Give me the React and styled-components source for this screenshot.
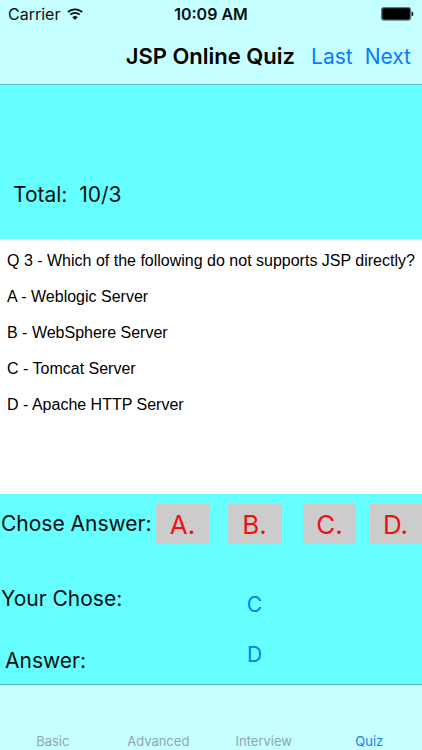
import React, { useState } from "react";
import styled, { createGlobalStyle } from "styled-components";

const options = [
  { id: "A", text: "Weblogic Server" },
  { id: "B", text: "WebSphere Server" },
  { id: "C", text: "Tomcat Server" },
  { id: "D", text: "Apache HTTP Server" },
];

const tabs = ["Basic", "Advanced", "Interview", "Quiz"];

const WifiIcon = () => (
  <svg width="16" height="12" viewBox="0 0 16 12" fill="none" aria-hidden="true">
    <path d="M0.9 4.2 A10.2 10.2 0 0 1 15.1 4.2" stroke="#0a1414" strokeWidth="1.8" />
    <path d="M3.3 6.7 A6.8 6.8 0 0 1 12.7 6.7" stroke="#0a1414" strokeWidth="1.8" />
    <path d="M8 12 L5.3 9.2 A3.9 3.9 0 0 1 10.7 9.2 Z" fill="#0a1414" />
  </svg>
);

const BatteryIcon = () => (
  <svg width="33" height="14" viewBox="0 0 33 14" aria-hidden="true">
    <rect x="0.7" y="0.7" width="28.8" height="12.4" rx="2" fill="#000" stroke="#5f7d7d" strokeWidth="1.3" />
    <path d="M30.6 4.6 C32.8 5 32.8 9 30.6 9.4 Z" fill="#000" />
  </svg>
);

export default function App() {
  const [chosen, setChosen] = useState("C");
  const [tab, setTab] = useState("Quiz");

  return (
    <Root>
      <GlobalStyle />

      <Header>
        <StatusBar>
          <Carrier>
            <span>Carrier</span>
            <WifiIcon />
          </Carrier>
          <Clock>10:09 AM</Clock>
          <Battery>
            <BatteryIcon />
          </Battery>
        </StatusBar>
        <NavBar>
          <Title>JSP Online Quiz</Title>
          <NavActions>
            <NavButton type="button">Last</NavButton>
            <NavButton type="button">Next</NavButton>
          </NavActions>
        </NavBar>
      </Header>

      <Summary>Total:&nbsp; 10/3</Summary>

      <Question>
        <p>Q 3 - Which of the following do not supports JSP directly?</p>
        {options.map((option) => (
          <p key={option.id}>
            {option.id} - {option.text}
          </p>
        ))}
      </Question>

      <AnswerPanel>
        <ChoiceRow>
          <Label>Chose Answer:</Label>
          {options.map((option) => (
            <ChoiceButton key={option.id} type="button" onClick={() => setChosen(option.id)}>
              {option.id}.
            </ChoiceButton>
          ))}
        </ChoiceRow>
        <Results>
          <LabelColumn>
            <Label>Your Chose:</Label>
            <Label $indent>Answer:</Label>
          </LabelColumn>
          <ValueColumn>
            <Value>{chosen}</Value>
            <Value>D</Value>
          </ValueColumn>
        </Results>
      </AnswerPanel>

      <TabBar>
        {tabs.map((name) => (
          <TabButton key={name} type="button" $active={name === tab} onClick={() => setTab(name)}>
            {name}
          </TabButton>
        ))}
      </TabBar>
    </Root>
  );
}

const GlobalStyle = createGlobalStyle`
  * {
    box-sizing: border-box;
  }
  body {
    margin: 0;
    background: #66ffff;
  }
  p, h1 {
    margin: 0;
  }
  button {
    padding: 0;
    border: 0;
    background: none;
    font-family: inherit;
    cursor: pointer;
  }
`;

const Root = styled.div`
  min-height: 100vh;
  display: flex;
  flex-direction: column;
  background: #66ffff;
  color: #071010;
  font-family: Inter, "Liberation Sans", sans-serif;
  white-space: nowrap;
`;

const Header = styled.header`
  background: #c6ffff;
  border-bottom: 1px solid #62b8b8;
`;

const StatusBar = styled.div`
  display: grid;
  grid-template-columns: 1fr auto 1fr;
  align-items: center;
  height: 28px;
  padding: 0 8px;
  font-size: 16px;
`;

const Carrier = styled.div`
  display: flex;
  align-items: center;
  gap: 7px;
`;

const Clock = styled.span`
  font-weight: 600;
`;

const Battery = styled.div`
  display: flex;
  justify-content: flex-end;
`;

const NavBar = styled.div`
  display: flex;
  align-items: center;
  justify-content: flex-end;
  gap: 16px;
  height: 56px;
  padding: 0 11px;
`;

const Title = styled.h1`
  font-size: 22px;
  font-weight: 600;
  color: #000;
`;

const NavActions = styled.nav`
  display: flex;
  gap: 12px;
`;

const NavButton = styled.button`
  font-size: 21px;
  color: #0a7aff;
`;

const Summary = styled.div`
  padding: 94px 13px 28px;
  font-size: 21px;
  line-height: 32px;
`;

const Question = styled.main`
  flex: 1;
  display: flex;
  flex-direction: column;
  gap: 18px;
  padding: 13px 7px;
  background: #fff;
  color: #000;
  font-family: "Liberation Sans", Arial, sans-serif;
  font-size: 16px;
  line-height: 18px;
`;

const AnswerPanel = styled.section`
  padding: 10px 0 7px;
`;

const ChoiceRow = styled.div`
  display: grid;
  grid-template-columns: 156fr 72fr 75fr 66fr 53fr;
  align-items: center;
`;

const Label = styled.span`
  padding-left: ${({ $indent }) => ($indent ? "5px" : "1px")};
  font-size: 21px;
  line-height: 32px;
`;

const ChoiceButton = styled.button`
  width: 53px;
  height: 40px;
  background: #cccccc;
  color: #f01010;
  font-size: 26px;
`;

const Results = styled.div`
  display: grid;
  grid-template-columns: 228fr 194fr;
  align-items: center;
  padding-top: 39px;
`;

const LabelColumn = styled.div`
  display: flex;
  flex-direction: column;
  gap: 30px;
`;

const ValueColumn = styled.div`
  display: flex;
  flex-direction: column;
  gap: 18px;
  width: 53px;
  text-align: center;
`;

const Value = styled.output`
  color: #0a7aff;
  font-size: 21px;
  line-height: 32px;
`;

const TabBar = styled.nav`
  display: flex;
  align-items: flex-end;
  height: 66px;
  background: #c6ffff;
  border-top: 1px solid #62b8b8;
`;

const TabButton = styled.button`
  flex: 1;
  height: 100%;
  padding-top: 46px;
  color: ${({ $active }) => ($active ? "#1a80f0" : "#8fa9a9")};
  font-size: 13px;
  line-height: 18px;
`;
